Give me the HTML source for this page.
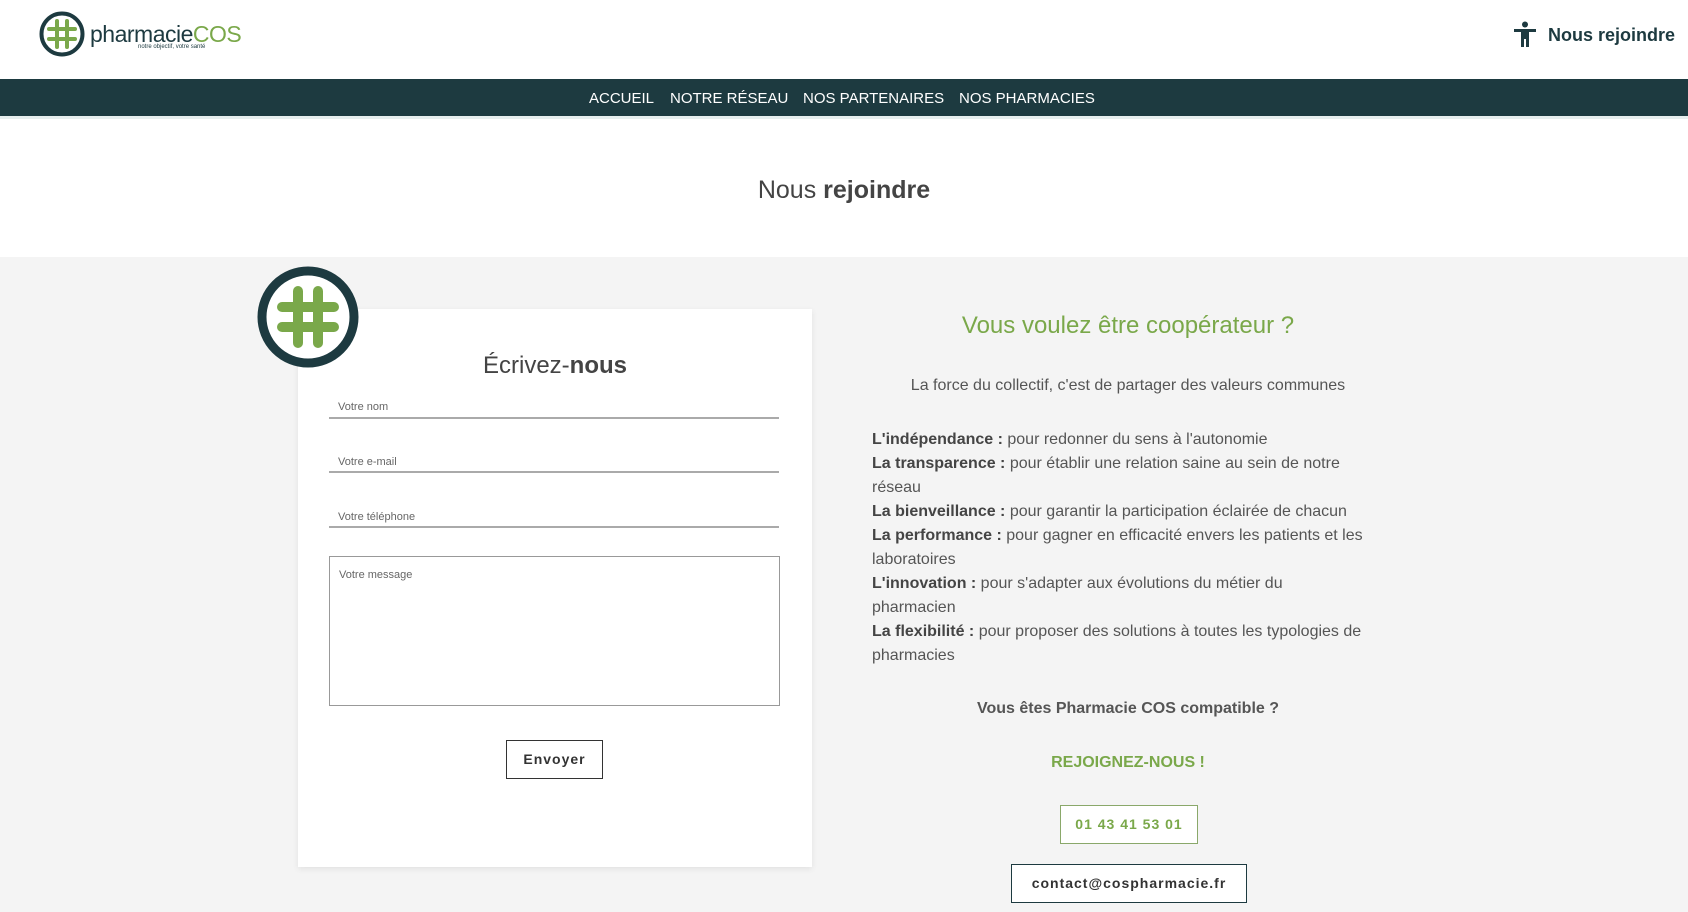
<!DOCTYPE html>
<html><head><meta charset="utf-8"><style>
*{margin:0;padding:0;box-sizing:border-box}
body{width:1688px;height:912px;overflow:hidden;background:#fff;font-family:"Liberation Sans",sans-serif;color:#555;position:relative}
.a{position:absolute}
.nav{left:0;top:79px;width:1688px;height:40px;background:#1d3a40;border-bottom:3px solid #e6eeee}
.nav span{position:absolute;top:11px;color:#fff;font-size:15px}
.gray{left:0;top:257px;width:1688px;height:655px;background:#f4f4f4}
.card{left:298px;top:309px;width:514px;height:558px;background:#fff;box-shadow:0 2px 6px rgba(0,0,0,.08)}
.lbl{font-size:11px;color:#666}
.line{height:2px;background:#aaa;width:450px;left:329px}
.list{left:872px;top:427px;width:500px;font-size:16px;line-height:24px;color:#555}
.list b{color:#444}
.btn{border:1px solid #333;background:#fff;text-align:center;font-size:14px;font-weight:bold;letter-spacing:1px;color:#333}
</style></head><body>
<svg class="a" style="left:39px;top:11px" width="46" height="46" viewBox="0 0 46 46"><circle cx="23" cy="23" r="20.5" fill="none" stroke="#1d3a40" stroke-width="4"/><g stroke="#7aa84a" stroke-width="4" stroke-linecap="round"><line x1="18" y1="10" x2="18" y2="36"/><line x1="28" y1="10" x2="28" y2="36"/><line x1="10" y1="18" x2="36" y2="18"/><line x1="10" y1="28" x2="36" y2="28"/></g></svg>
<div class="a" style="left:90px;top:21px;font-size:23px;color:#1d3a40;letter-spacing:-0.5px">pharmacie<span style="color:#7aa84a">COS</span></div>
<div class="a" style="left:138px;top:44px;font-size:6px;color:#1d3a40">notre objectif, votre santé</div>
<svg class="a" style="left:1513px;top:21px" width="24" height="27" viewBox="0 0 24 27"><circle cx="12" cy="3.5" r="3" fill="#1d3a40"/><path d="M1 8h22v3h-7v15h-3v-8h-2v8H8V11H1z" fill="#1d3a40"/></svg>
<div class="a" style="left:1548px;top:25px;font-size:18px;font-weight:bold;color:#1d3a40">Nous rejoindre</div>
<div class="a nav"><span style="left:589px">ACCUEIL</span><span style="left:670px">NOTRE RÉSEAU</span><span style="left:803px">NOS PARTENAIRES</span><span style="left:959px">NOS PHARMACIES</span></div>
<div class="a" style="left:0;width:1688px;top:176px;text-align:center;font-size:25px;color:#444">Nous <b>rejoindre</b></div>
<div class="a gray"></div>
<div class="a card"></div>
<svg class="a" style="left:257px;top:266px" width="102" height="102" viewBox="0 0 102 102"><circle cx="51" cy="51" r="46" fill="#fff" stroke="#1d3a40" stroke-width="9"/><g stroke="#7aa84a" stroke-width="10" stroke-linecap="round"><line x1="41" y1="25" x2="41" y2="77"/><line x1="61" y1="25" x2="61" y2="77"/><line x1="25" y1="41" x2="77" y2="41"/><line x1="25" y1="61" x2="77" y2="61"/></g></svg>
<div class="a" style="left:298px;width:514px;top:352px;text-align:center;font-size:24px;color:#444">Écrivez-<b>nous</b></div>
<div class="a lbl" style="left:338px;top:401px">Votre nom</div><div class="a line" style="top:417px"></div>
<div class="a lbl" style="left:338px;top:456px">Votre e-mail</div><div class="a line" style="top:471px"></div>
<div class="a lbl" style="left:338px;top:511px">Votre téléphone</div><div class="a line" style="top:526px"></div>
<div class="a" style="left:329px;top:556px;width:451px;height:150px;border:1px solid #999;background:#fff"></div>
<div class="a lbl" style="left:339px;top:569px">Votre message</div>
<div class="a btn" style="left:506px;top:740px;width:97px;height:39px;line-height:37px">Envoyer</div>
<div class="a" style="left:868px;width:520px;top:312px;text-align:center;font-size:24px;color:#7aa84a">Vous voulez être coopérateur ?</div>
<div class="a" style="left:868px;width:520px;top:377px;text-align:center;font-size:16px">La force du collectif, c'est de partager des valeurs communes</div>
<div class="a list" style="top:428px"><b>L'indépendance :</b> pour redonner du sens à l'autonomie<br><b>La transparence :</b> pour établir une relation saine au sein de notre réseau<br><b>La bienveillance :</b> pour garantir la participation éclairée de chacun<br><b>La performance :</b> pour gagner en efficacité envers les patients et les laboratoires<br><b>L'innovation :</b> pour s'adapter aux évolutions du métier du<br>pharmacien<br><b>La flexibilité :</b> pour proposer des solutions à toutes les typologies de pharmacies</div>
<div class="a" style="left:868px;width:520px;top:700px;text-align:center;font-size:16px;font-weight:bold">Vous êtes Pharmacie COS compatible ?</div>
<div class="a" style="left:868px;width:520px;top:754px;text-align:center;font-size:16px;font-weight:bold;color:#7aa84a">REJOIGNEZ-NOUS !</div>
<div class="a btn" style="left:1060px;top:805px;width:138px;height:39px;line-height:37px;border-color:#8aa86a;color:#7aa84a">01 43 41 53 01</div>
<div class="a btn" style="left:1011px;top:864px;width:236px;height:39px;line-height:37px;border-color:#1d3a40">contact@cospharmacie.fr</div>
</body></html>
